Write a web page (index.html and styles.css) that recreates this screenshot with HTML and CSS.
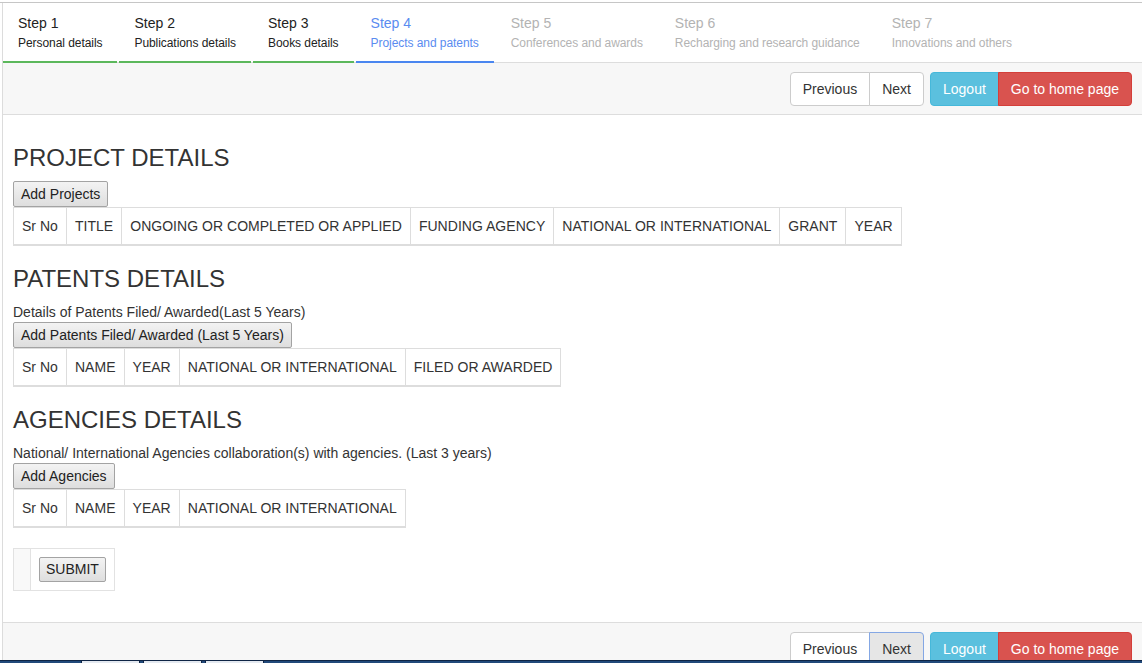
FILE: index.html
```html
<!DOCTYPE html>
<html lang="en">
<head>
<meta charset="utf-8">
<title>Projects and patents</title>
<link rel="stylesheet" href="styles.css">
</head>
<body>
<div class="window">
  <div class="frame">
    <nav class="steps">
      <div class="step done"><div class="step-title">Step 1</div><div class="step-sub">Personal details</div></div>
      <div class="step done"><div class="step-title">Step 2</div><div class="step-sub">Publications details</div></div>
      <div class="step done"><div class="step-title">Step 3</div><div class="step-sub">Books details</div></div>
      <div class="step active"><div class="step-title">Step 4</div><div class="step-sub">Projects and patents</div></div>
      <div class="step disabled"><div class="step-title">Step 5</div><div class="step-sub">Conferences and awards</div></div>
      <div class="step disabled"><div class="step-title">Step 6</div><div class="step-sub">Recharging and research guidance</div></div>
      <div class="step disabled"><div class="step-title">Step 7</div><div class="step-sub">Innovations and others</div></div>
    </nav>

    <div class="toolbar">
      <div class="btn-group">
        <button class="btn btn-default">Previous</button><button class="btn btn-default">Next</button>
      </div>
      <div class="btn-group">
        <button class="btn btn-info">Logout</button><button class="btn btn-danger">Go to home page</button>
      </div>
    </div>

    <main class="content">
      <h3 class="section-title">PROJECT DETAILS</h3>
      <button class="sys-btn">Add Projects</button>
      <table class="grid">
        <thead><tr><th>Sr No</th><th>TITLE</th><th>ONGOING OR COMPLETED OR APPLIED</th><th>FUNDING AGENCY</th><th>NATIONAL OR INTERNATIONAL</th><th>GRANT</th><th>YEAR</th></tr></thead>
      </table>

      <h3 class="section-title">PATENTS DETAILS</h3>
      <p class="note">Details of Patents Filed/ Awarded(Last 5 Years)</p>
      <button class="sys-btn">Add Patents Filed/ Awarded (Last 5 Years)</button>
      <table class="grid">
        <thead><tr><th>Sr No</th><th>NAME</th><th>YEAR</th><th>NATIONAL OR INTERNATIONAL</th><th>FILED OR AWARDED</th></tr></thead>
      </table>

      <h3 class="section-title">AGENCIES DETAILS</h3>
      <p class="note">National/ International Agencies collaboration(s) with agencies. (Last 3 years)</p>
      <button class="sys-btn">Add Agencies</button>
      <table class="grid">
        <thead><tr><th>Sr No</th><th>NAME</th><th>YEAR</th><th>NATIONAL OR INTERNATIONAL</th></tr></thead>
      </table>

      <table class="submit-table">
        <tr><td class="blank"></td><td><button class="sys-btn sys-btn-sm">SUBMIT</button></td></tr>
      </table>
    </main>

    <div class="toolbar toolbar-bottom">
      <div class="btn-group">
        <button class="btn btn-default">Previous</button><button class="btn btn-default focused">Next</button>
      </div>
      <div class="btn-group">
        <button class="btn btn-info">Logout</button><button class="btn btn-danger">Go to home page</button>
      </div>
    </div>
  </div>
</div>
<div class="taskbar"><span class="task-tab"></span><span class="task-tab"></span><span class="task-tab"></span></div>
</body>
</html>
```

FILE: styles.css
```css
* { box-sizing: border-box; }

html, body {
  margin: 0;
  padding: 0;
  background: #fff;
}

body {
  font-family: "Liberation Sans", Arial, sans-serif;
  font-size: 14px;
  line-height: 20px;
  color: #333;
  padding-top: 2px;
}

.window {
  border-top: 1px solid #c6c6c6;
}

.frame {
  margin-left: 2px;
  border-left: 1px solid #dcdcdc;
}

/* Steps */
.steps {
  display: flex;
  gap: 2px;
  border-bottom: 1px solid #ddd;
  height: 60px;
}

.step {
  padding: 10px 15px 8px;
  border-bottom: 2px solid transparent;
  height: 60px;
  white-space: nowrap;
}

.step-title {
  font-size: 14px;
  line-height: 20px;
}

.step-sub {
  font-size: 12px;
  line-height: 20px;
  letter-spacing: -0.06px;
}

.step.done {
  color: #222;
  border-bottom-color: #5cb85c;
}

.step.active {
  color: #5a8cf0;
  border-bottom-color: #4a86f0;
}

.step.disabled {
  color: #b3b3b3;
}

/* Toolbars */
.toolbar {
  display: flex;
  justify-content: flex-end;
  gap: 6px;
  background: #f7f7f7;
  padding: 9px 10px 8px;
  border-bottom: 1px solid #ddd;
}

.toolbar-bottom {
  border-top: 1px solid #ddd;
  border-bottom: none;
}

.btn-group {
  display: flex;
}

.btn {
  font-family: "Liberation Sans", Arial, sans-serif;
  font-size: 14px;
  line-height: 20px;
  padding: 6px 12px;
  border: 1px solid transparent;
  border-radius: 4px;
  height: 34px;
  margin: 0;
  cursor: pointer;
}

.btn-group .btn:first-child {
  border-top-right-radius: 0;
  border-bottom-right-radius: 0;
}

.btn-group .btn:last-child {
  border-top-left-radius: 0;
  border-bottom-left-radius: 0;
  margin-left: -1px;
}

.btn-default {
  background: #fff;
  border-color: #ccc;
  color: #333;
}

.btn-default.focused {
  background: #e6e6e6;
  border-color: #84a7e4;
  position: relative;
}

.btn-info {
  background: #5bc0de;
  border-color: #46b8da;
  color: #fff;
}

.btn-danger {
  background: #d9534f;
  border-color: #d43f3a;
  color: #fff;
}

/* Content */
.content {
  padding: 10px 10px 11px;
  display: flow-root;
}

.section-title {
  font-size: 24px;
  font-weight: normal;
  line-height: 26px;
  margin: 20px 0 10px;
  color: #333;
}

.note {
  margin: 0;
}

.sys-btn {
  display: block;
  font-family: "Liberation Sans", Arial, sans-serif;
  font-size: 14px;
  line-height: 18px;
  padding: 3px 7px;
  height: 26px;
  color: #222;
  background: linear-gradient(#f3f3f3, #dedede);
  border: 1px solid #a3a3a3;
  border-radius: 2px;
  margin: 0;
}

.sys-btn-sm {
  height: 25px;
  line-height: 17px;
  padding: 3px 6px;
}

.grid {
  border-collapse: collapse;
  margin-bottom: 20px;
}

.grid th {
  font-weight: normal;
  text-align: left;
  padding: 8px;
  line-height: 20px;
  letter-spacing: 0.03px;
  border: 1px solid #ddd;
  border-bottom: 2px solid #ddd;
  white-space: nowrap;
}

.submit-table {
  border-collapse: collapse;
  margin-bottom: 20px;
}

.submit-table td {
  border: 1px solid #e2e2e2;
  padding: 8px;
}

.submit-table td.blank {
  background: #f9f9f9;
}

/* Desktop taskbar strip at the bottom edge */
.taskbar {
  position: fixed;
  left: 0;
  right: 0;
  bottom: 0;
  height: 3px;
  background: #21497a;
  border-top: 1px solid #0e2444;
  display: flex;
  padding-left: 81px;
  gap: 3px;
}

.task-tab {
  width: 59px;
  height: 3px;
  background: #e4e9f0;
  border-left: 1px solid #0e2444;
  border-right: 1px solid #0e2444;
}
```
